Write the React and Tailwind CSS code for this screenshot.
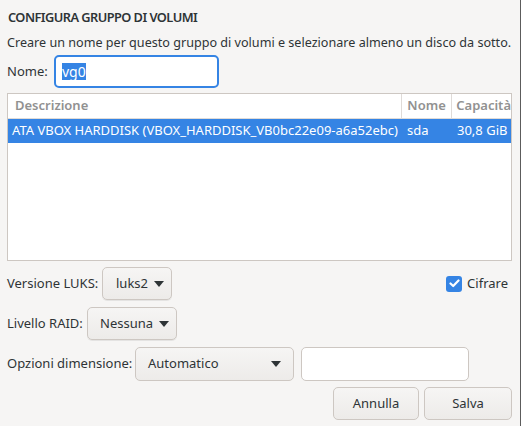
import React from "react";

const font = { fontFamily: '"Noto Sans", "Open Sans", sans-serif' };

function Arrow() {
  return (
    <svg width="10" height="6" viewBox="0 0 10 6" className="shrink-0">
      <path d="M0 0 L10 0 L5 6 Z" fill="#2e3436" />
    </svg>
  );
}

function DropButton({ label, className = "" }) {
  return (
    <div
      className={`flex items-center gap-[6px] rounded-[5px] border border-[#cdc7c2] bg-gradient-to-b from-[#f6f5f4] to-[#edebe9] shadow-[0_1px_0_rgba(0,0,0,0.07)] ${className}`}
    >
      <span>{label}</span>
      <Arrow />
    </div>
  );
}

export default function App() {
  return (
    <div
      style={font}
      className="relative w-[521px] h-[426px] overflow-hidden bg-[#f6f5f4] text-[13px] text-[#2e3436]"
    >
      <div className="absolute right-0 top-0 h-full w-px bg-[#5c5c5c]" />
      <div className="flex flex-col pl-[7px] pt-[8px]">
        <h1 className="text-[12.8px] font-semibold tracking-[-0.55px] leading-[18px] pl-px">
          CONFIGURA GRUPPO DI VOLUMI
        </h1>
        <p className="mt-[8px] leading-[18px] text-[12.6px] whitespace-nowrap">
          Creare un nome per questo gruppo di volumi e selezionare almeno un disco da sotto.
        </p>

        <div className="mt-[3px] flex items-center h-[33px]">
          <span className="w-[47px]">Nome:</span>
          <div className="flex items-center h-[33px] w-[165px] rounded-[5px] border-2 border-[#3584e4] bg-white pl-[6px]">
            <span className="bg-[#3584e4] text-white leading-[17px] text-[14px]">vg0</span>
          </div>
        </div>

        <div className="mt-[5px] h-[168px] w-[505px] overflow-hidden border border-[#cdc7c2] bg-white">
          <div className="flex h-[25px] items-center border-b border-[#dfdbd8] text-[#919191] font-semibold">
            <div className="w-[395px] h-full flex items-center pl-[7px] border-r border-[#dfdbd8]">Descrizione</div>
            <div className="w-[50px] h-full flex items-center pl-[5px] border-r border-[#dfdbd8]">Nome</div>
            <div className="flex-1 h-full flex items-center pl-[4px] whitespace-nowrap">Capacità</div>
          </div>
          <div className="flex h-[24px] items-center bg-[#3584e4] text-white whitespace-nowrap">
            <div className="w-[395px] pl-[4px]">ATA VBOX HARDDISK (VBOX_HARDDISK_VB0bc22e09-a6a52ebc)</div>
            <div className="w-[50px] pl-[4px]">sda</div>
            <div className="flex-1 pl-[4px]">30,8 GiB</div>
          </div>
        </div>

        <div className="mt-[6px] flex items-center h-[33px] pr-[13px]">
          <span className="w-[95px]">Versione LUKS:</span>
          <DropButton label="luks2" className="h-[33px] w-[70px] pl-[13px]" />
          <label className="ml-auto flex items-center gap-[5px]">
            <span className="flex h-[16px] w-[16px] items-center justify-center rounded-[3px] bg-[#3584e4]">
              <svg width="11" height="9" viewBox="0 0 11 9">
                <path d="M1.5 4.5 L4.2 7 L9.5 1.5" stroke="white" strokeWidth="2.2" fill="none" strokeLinecap="round" strokeLinejoin="round" />
              </svg>
            </span>
            <span>Cifrare</span>
          </label>
        </div>

        <div className="mt-[7px] flex items-center h-[33px]">
          <span className="w-[80px]">Livello RAID:</span>
          <DropButton label="Nessuna" className="h-[33px] w-[90px] pl-[12px]" />
        </div>

        <div className="mt-[7px] flex items-center h-[34px]">
          <span className="w-[128px]">Opzioni dimensione:</span>
          <div className="flex h-[34px] w-[159px] items-center justify-between rounded-[5px] border border-[#cdc7c2] bg-gradient-to-b from-[#f6f5f4] to-[#edebe9] pl-[12px] pr-[12px]">
            <span>Automatico</span>
            <Arrow />
          </div>
          <div className="ml-[7px] h-[34px] w-[168px] rounded-[5px] border border-[#cdc7c2] bg-white" />
        </div>

        <div className="mt-[6px] flex justify-end gap-[5px] pr-[9px]">
          <div className="flex h-[33px] w-[86px] items-center justify-center rounded-[5px] border border-[#cdc7c2] bg-gradient-to-b from-[#f6f5f4] to-[#edebe9]">
            Annulla
          </div>
          <div className="flex h-[33px] w-[88px] items-center justify-center rounded-[5px] border border-[#cdc7c2] bg-gradient-to-b from-[#f6f5f4] to-[#edebe9]">
            Salva
          </div>
        </div>
      </div>
    </div>
  );
}
